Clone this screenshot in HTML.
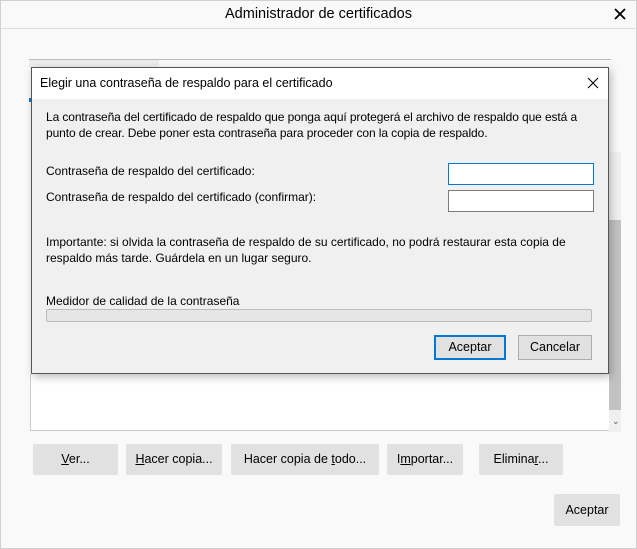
<!DOCTYPE html>
<html><head><style>
*{box-sizing:border-box;margin:0;padding:0}
body{width:637px;height:549px;background:#f9f9f9;font-family:"Liberation Sans",sans-serif;font-size:12px;color:#000;position:relative;overflow:hidden}
.a{position:absolute}
.win{left:0;top:0;width:637px;height:549px;border:1px solid #d0d0d0}
.btn{position:absolute;background:#e1e1e1;border-radius:2px;text-align:center;font-size:12.5px}
.dlg{left:31px;top:67px;width:578px;height:307px;background:#f0f0f0;border:1px solid #555;box-shadow:2px 3px 8px rgba(0,0,0,.25)}
.inp{position:absolute;background:#fff;border:1px solid #7a7a7a}
.dbtn{position:absolute;background:#e1e1e1;border:1px solid #adadad;text-align:center;line-height:22px;font-size:12.5px}
</style></head><body>
<div class="a win"></div>
<div class="a" style="left:0;top:0;width:637px;height:29px;border-bottom:1px solid #ddd;text-align:center;line-height:28px;font-size:14.5px">Administrador de certificados</div>
<svg class="a" style="left:614px;top:8px" width="12" height="12"><path d="M1 1L11 11M11 1L1 11" stroke="#000" stroke-width="1.8"/></svg>
<div class="a" style="left:29px;top:59px;width:582px;height:1px;background:#bbb"></div>
<div class="a" style="left:29px;top:60px;width:130px;height:8px;background:#ececec"></div>
<div class="a" style="left:29px;top:98px;width:3px;height:4px;background:#0078d7"></div>
<div class="a" style="left:30px;top:374px;width:580px;height:57px;background:#fff;border-bottom:1px solid #ccc;border-left:1px solid #ccc"></div>
<div class="a" style="left:609px;top:152px;width:12px;height:280px;background:#f0f0f0"></div>
<div class="a" style="left:609px;top:220px;width:12px;height:190px;background:#c2c2c2"></div>
<div class="a" style="left:612px;top:416px;font-size:9px;color:#555">⌄</div>
<div class="btn" style="left:33px;top:444px;width:85px;height:31px;line-height:31px"><u>V</u>er...</div>
<div class="btn" style="left:126px;top:444px;width:96px;height:31px;line-height:31px"><u>H</u>acer copia...</div>
<div class="btn" style="left:231px;top:444px;width:148px;height:31px;line-height:31px">Hacer copia de <u>t</u>odo...</div>
<div class="btn" style="left:387px;top:444px;width:76px;height:31px;line-height:31px">I<u>m</u>portar...</div>
<div class="btn" style="left:479px;top:444px;width:84px;height:31px;line-height:31px">Elimina<u>r</u>...</div>
<div class="btn" style="left:554px;top:494px;width:66px;height:32px;line-height:32px">Aceptar</div>
<div class="a dlg">
<div class="a" style="left:0;top:0;width:576px;height:31px;background:#fff;line-height:31px;padding-left:8px;font-size:12.5px">Elegir una contraseña de respaldo para el certificado</div>
<svg class="a" style="left:555px;top:9px" width="12" height="12"><path d="M1 1L11 11M11 1L1 11" stroke="#000" stroke-width="1.1"/></svg>
<div class="a" style="left:14px;top:41px;font-size:12px;line-height:16px;width:560px;letter-spacing:-0.1px">La contraseña del certificado de respaldo que ponga aquí protegerá el archivo de respaldo que está a<br>punto de crear. Debe poner esta contraseña para proceder con la copia de respaldo.</div>
<div class="a" style="left:14px;top:96px">Contraseña de respaldo del certificado:</div>
<div class="a" style="left:14px;top:122px">Contraseña de respaldo del certificado (confirmar):</div>
<div class="inp" style="left:416px;top:95px;width:146px;height:22px;border-color:#0078d7"></div>
<div class="inp" style="left:416px;top:122px;width:146px;height:22px"></div>
<div class="a" style="left:14px;top:166px;line-height:16px;width:560px">Importante: si olvida la contraseña de respaldo de su certificado, no podrá restaurar esta copia de<br>respaldo más tarde. Guárdela en un lugar seguro.</div>
<div class="a" style="left:14px;top:226px">Medidor de calidad de la contraseña</div>
<div class="a" style="left:14px;top:241px;width:546px;height:13px;background:#e6e6e6;border:1px solid #bcbcbc;border-radius:2px"></div>
<div class="dbtn" style="left:402px;top:267px;width:72px;height:25px;border:2px solid #0078d7;line-height:21px">Aceptar</div>
<div class="dbtn" style="left:486px;top:267px;width:74px;height:25px">Cancelar</div>
</div>
</body></html>
